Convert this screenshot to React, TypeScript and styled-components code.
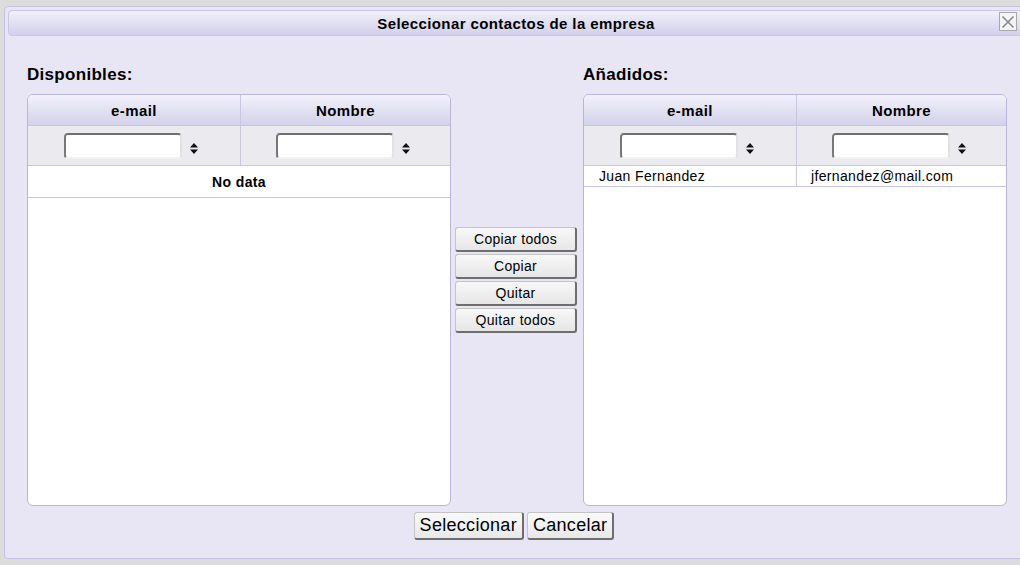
import styled, { createGlobalStyle } from 'styled-components'

interface Contact {
  email: string
  nombre: string
}

const GlobalStyle = createGlobalStyle`
  html, body {
    margin: 0;
    padding: 0;
    background: #dcdcdc;
    font-family: "Liberation Sans", Arial, sans-serif;
    color: #000;
  }
  #root {
    width: 1020px;
    height: 565px;
    overflow: hidden;
  }
`

const Page = styled.div`
  padding: 6px 0 0 4px;
  height: 565px;
  box-sizing: border-box;
`

const Dialog = styled.div`
  width: 1030px;
  height: 553px;
  box-sizing: border-box;
  background: #e8e6f4;
  border: 1px solid #c6c2e2;
  border-radius: 4px;
  padding: 3px;
  display: flex;
  flex-direction: column;
`

const TitleBar = styled.div`
  position: relative;
  height: 26px;
  margin-right: 6px;
  box-sizing: border-box;
  border: 1px solid #c9c6e6;
  border-radius: 4px;
  background: linear-gradient(to bottom, #f1f0fa, #d2d0ea);
  display: flex;
  align-items: center;
  justify-content: center;
  font-weight: bold;
  font-size: 15px;
  letter-spacing: 0.4px;
`

const CloseButton = styled.button`
  position: absolute;
  right: 6px;
  top: 1px;
  width: 18px;
  height: 19px;
  padding: 0;
  border: 1px solid #a8a8a8;
  background: #f3f3f8;
  display: flex;
  align-items: center;
  justify-content: center;
  cursor: pointer;
`

const Body = styled.div`
  display: flex;
  padding: 30px 0 0 19px;
`

const Panel = styled.div`
  width: 424px;
  display: flex;
  flex-direction: column;
`

const PanelLabel = styled.div`
  font-weight: bold;
  font-size: 17px;
  letter-spacing: 0.3px;
  height: 28px;
  line-height: 18px;
`

const Table = styled.div`
  height: 412px;
  box-sizing: border-box;
  border: 1px solid #b9b6d8;
  border-radius: 6px;
  background: #fff;
  overflow: hidden;
  display: flex;
  flex-direction: column;
`

const HeaderRow = styled.div`
  display: grid;
  grid-template-columns: 212px 1fr;
  height: 30px;
  background: linear-gradient(to bottom, #f2f1fb, #d3d2ea);
  border-bottom: 1px solid #c9c7e0;
`

const HeaderCell = styled.div`
  display: flex;
  align-items: center;
  justify-content: center;
  font-weight: bold;
  font-size: 15px;
  letter-spacing: 0.4px;
  & + & {
    border-left: 1px solid #c9c7e0;
  }
`

const FilterRow = styled.div`
  display: grid;
  grid-template-columns: 212px 1fr;
  height: 39px;
  background: #ebebef;
  border-bottom: 1px solid #c7c5df;
`

const FilterCell = styled.div`
  display: flex;
  align-items: center;
  justify-content: center;
  gap: 8px;
  padding-right: 6px;
  & + & {
    border-left: 1px solid #c9c7e0;
  }
`

const FilterInput = styled.input`
  width: 118px;
  height: 26px;
  box-sizing: border-box;
  border-radius: 4px;
  border: 2px solid;
  border-color: #6f6f6f #e2e2e2 #f0f0f0 #777;
  background: #fff;
  outline: none;
`

const SortIcon = styled.svg`
  width: 8px;
  height: 11px;
  margin-top: 6px;
`

const NoData = styled.div`
  height: 31px;
  display: flex;
  align-items: center;
  justify-content: center;
  font-weight: bold;
  font-size: 14px;
  letter-spacing: 0.4px;
  border-bottom: 1px solid #c7c5df;
`

const DataRow = styled.div`
  display: grid;
  grid-template-columns: 212px 1fr;
  height: 20px;
  border-bottom: 1px solid #c7c5df;
  font-size: 14px;
  letter-spacing: 0.35px;
`

const DataCell = styled.div`
  display: flex;
  align-items: center;
  padding-left: 14px;
  &:first-child {
    padding-left: 15px;
  }
  & + & {
    border-left: 1px solid #c9c7e0;
  }
`

const Middle = styled.div`
  width: 122px;
  margin: 0 6px 0 4px;
  padding-top: 161px;
  display: flex;
  flex-direction: column;
  gap: 2px;
`

const MoveButton = styled.button`
  height: 25px;
  box-sizing: border-box;
  padding: 0;
  border: 1px solid #c4c4c4;
  border-right: 2px solid #6e6e6e;
  border-bottom: 2px solid #6e6e6e;
  border-radius: 3px;
  background: linear-gradient(to bottom, #f8f8f8, #e6e6e6);
  font-family: "Liberation Sans", Arial, sans-serif;
  font-size: 14px;
  letter-spacing: 0.3px;
  color: #000;
  cursor: pointer;
`

const Footer = styled.div`
  display: flex;
  justify-content: center;
  gap: 3px;
  padding: 6px 10px 0 0;
`

const FooterButton = styled.button`
  height: 28px;
  box-sizing: border-box;
  padding: 0 5px;
  border: 1px solid #c4c4c4;
  border-right: 2px solid #6e6e6e;
  border-bottom: 2px solid #6e6e6e;
  border-radius: 3px;
  background: linear-gradient(to bottom, #fafafa, #e8e8e8);
  font-family: "Liberation Sans", Arial, sans-serif;
  font-size: 18px;
  letter-spacing: 0.3px;
  color: #000;
  cursor: pointer;
`

const Sort = () => (
  <SortIcon viewBox="0 0 8 11">
    <path d="M4 0 L8 4.5 L0 4.5 Z M0 6.5 L8 6.5 L4 11 Z" fill="#111" />
  </SortIcon>
)

const ContactTable = ({ rows }: { rows: Contact[] }) => (
  <Table>
    <HeaderRow>
      <HeaderCell>e-mail</HeaderCell>
      <HeaderCell>Nombre</HeaderCell>
    </HeaderRow>
    <FilterRow>
      <FilterCell>
        <FilterInput />
        <Sort />
      </FilterCell>
      <FilterCell>
        <FilterInput />
        <Sort />
      </FilterCell>
    </FilterRow>
    {rows.length === 0 ? (
      <NoData>No data</NoData>
    ) : (
      rows.map((r) => (
        <DataRow key={r.email}>
          <DataCell>{r.nombre}</DataCell>
          <DataCell>{r.email}</DataCell>
        </DataRow>
      ))
    )}
  </Table>
)

const added: Contact[] = [
  { nombre: 'Juan Fernandez', email: 'jfernandez@mail.com' },
]

const App = () => {
  return (
    <>
      <GlobalStyle />
      <Page>
        <Dialog>
          <TitleBar>
            Seleccionar contactos de la empresa
            <CloseButton aria-label="Cerrar">
              <svg width="14" height="14" viewBox="0 0 14 14">
                <path d="M1.5 1.5 L12.5 12.5 M12.5 1.5 L1.5 12.5" stroke="#8a8a8a" strokeWidth="1.6" />
              </svg>
            </CloseButton>
          </TitleBar>
          <Body>
            <Panel>
              <PanelLabel>Disponibles:</PanelLabel>
              <ContactTable rows={[]} />
            </Panel>
            <Middle>
              <MoveButton>Copiar todos</MoveButton>
              <MoveButton>Copiar</MoveButton>
              <MoveButton>Quitar</MoveButton>
              <MoveButton>Quitar todos</MoveButton>
            </Middle>
            <Panel>
              <PanelLabel>Añadidos:</PanelLabel>
              <ContactTable rows={added} />
            </Panel>
          </Body>
          <Footer>
            <FooterButton>Seleccionar</FooterButton>
            <FooterButton>Cancelar</FooterButton>
          </Footer>
        </Dialog>
      </Page>
    </>
  )
}

export default App
